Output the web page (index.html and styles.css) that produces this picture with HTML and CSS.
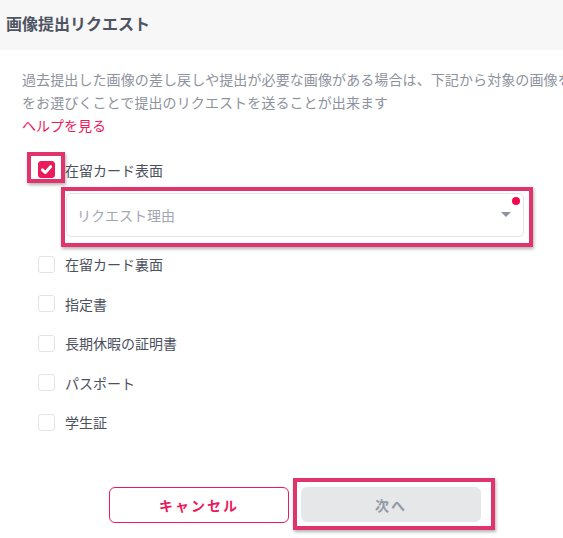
FILE: index.html
```html
<!DOCTYPE html>
<html lang="ja">
<head>
<meta charset="utf-8">
<title>画像提出リクエスト</title>
<link rel="stylesheet" href="styles.css">
</head>
<body>
<div class="page">
  <header class="header">
    <h1 class="title">画像提出リクエスト</h1>
  </header>
  <main class="main">
    <p class="desc"><span class="line">過去提出した画像の差し戻しや提出が必要な画像がある場合は、下記から対象の画像を</span><span class="line">をお選びくことで提出のリクエストを送ることが出来ます</span></p>
    <a class="help" href="#">ヘルプを見る</a>

    <ul class="options">
      <li class="option first">
        <span class="box checked">
          <svg width="17" height="17" viewBox="0 0 17 17"><path d="M4.4 8.9 L7.4 11.6 L12.6 5.7" fill="none" stroke="#fff" stroke-width="3" stroke-linecap="round" stroke-linejoin="round"/></svg>
        </span>
        <span class="label">在留カード表面</span>
      </li>
      <li class="select-row">
        <div class="select">
          <span class="placeholder">リクエスト理由</span>
          <span class="arrow"></span>
          <span class="dot"></span>
        </div>
      </li>
      <li class="option"><span class="box"></span><span class="label">在留カード裏面</span></li>
      <li class="option"><span class="box"></span><span class="label">指定書</span></li>
      <li class="option"><span class="box"></span><span class="label">長期休暇の証明書</span></li>
      <li class="option"><span class="box"></span><span class="label">パスポート</span></li>
      <li class="option"><span class="box"></span><span class="label">学生証</span></li>
    </ul>

    <div class="actions">
      <button class="btn cancel">キャンセル</button>
      <button class="btn next">次へ</button>
    </div>
  </main>

  <div class="mark mark-check"></div>
  <div class="mark mark-select"></div>
  <div class="mark mark-next"></div>
</div>
</body>
</html>
```

FILE: styles.css
```css
html, body {
  margin: 0;
  padding: 0;
  background: #ffffff;
  overflow: hidden;
}
body {
  font-family: "Noto Sans CJK JP", "Noto Sans", sans-serif;
  color: #4b505e;
}
.page {
  position: relative;
  width: 563px;
  height: 538px;
  overflow: hidden;
}
.header {
  height: 50px;
  background: #f7f7f8;
  padding: 12px 0 0 6px;
  box-sizing: border-box;
}
.title {
  margin: 0;
  font-size: 16px;
  line-height: 22px;
  font-weight: bold;
  color: #4e5462;
}
.main {
  padding: 18px 0 0 22px;
}
.desc {
  margin: 0;
  font-size: 14px;
  line-height: 23px;
  color: #8d929e;
  letter-spacing: 0.1px;
}
.line {
  display: block;
  white-space: nowrap;
}
.help {
  display: block;
  font-size: 14px;
  line-height: 23px;
  color: #ec1b5c;
  text-decoration: none;
}
.options {
  list-style: none;
  margin: 13px 0 0 0;
  padding: 0 0 0 16px;
}
.option {
  height: 39.5px;
  display: flex;
  align-items: center;
  gap: 10px;
}
.box {
  width: 17px;
  height: 17px;
  box-sizing: border-box;
  border: 1px solid #e2e3e7;
  border-radius: 3px;
  background: #fff;
  display: flex;
}
.box.checked {
  background: #ea1a5c;
  border-color: #ea1a5c;
}
.box.checked svg {
  margin: -1px;
}
.label {
  font-size: 14px;
  line-height: 20px;
  color: #4b505e;
}
.select-row {
  margin: 3px 0 8px 28px;
}
.select {
  position: relative;
  width: 458px;
  height: 44px;
  box-sizing: border-box;
  border: 1px solid #e3e4e8;
  border-radius: 5px;
  display: flex;
  align-items: center;
  padding-left: 10px;
}
.placeholder {
  font-size: 14px;
  color: #a3a7b1;
}
.arrow {
  position: absolute;
  right: 12px;
  top: 18px;
  width: 0;
  height: 0;
  border-left: 5px solid transparent;
  border-right: 5px solid transparent;
  border-top: 5px solid #8e93a1;
}
.dot {
  position: absolute;
  right: 3px;
  top: 3px;
  width: 8px;
  height: 8px;
  border-radius: 50%;
  background: #f0094f;
}
.actions {
  display: flex;
  gap: 12px;
  margin-top: 45px;
  padding-left: 87px;
}
.btn {
  width: 180px;
  height: 36px;
  box-sizing: border-box;
  border-radius: 6px;
  font-family: "Noto Sans CJK JP", "Noto Sans", sans-serif;
  font-size: 14px;
  font-weight: bold;
  letter-spacing: 2px;
  padding: 0;
}
.cancel {
  background: #fff;
  border: 1px solid #ea1a5c;
  color: #ea1a5c;
}
.next {
  background: #e6e7e9;
  border: 1px solid #e3e6ec;
  color: #9298a6;
  height: 35px;
}
.mark {
  position: absolute;
  border: 4px solid #e0346d;
  box-shadow: 1px 2px 3px rgba(0, 0, 0, 0.3);
  box-sizing: border-box;
}
.mark-check {
  left: 27px;
  top: 152px;
  width: 38px;
  height: 31px;
}
.mark-select {
  left: 61px;
  top: 187px;
  width: 472px;
  height: 60px;
}
.mark-next {
  left: 293px;
  top: 478px;
  width: 202px;
  height: 52px;
}
```
